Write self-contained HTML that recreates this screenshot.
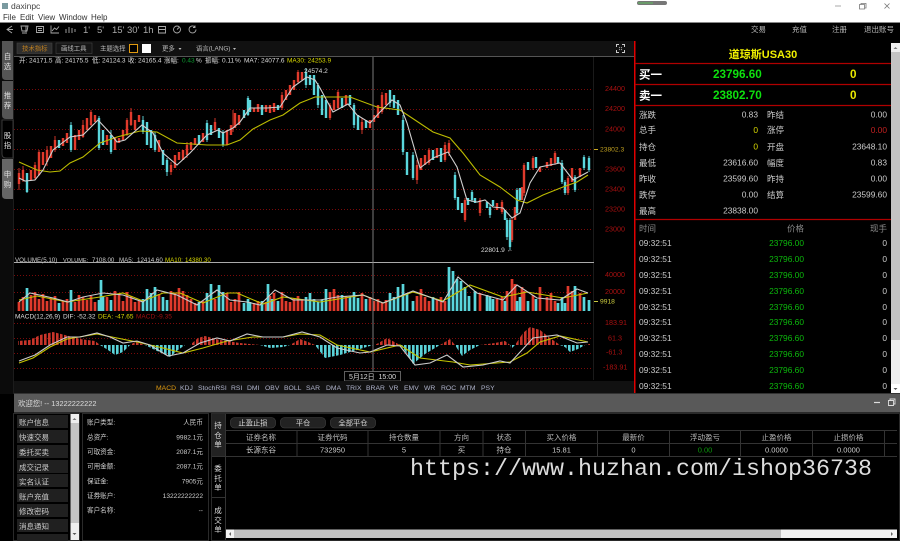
<!DOCTYPE html>
<html><head><meta charset="utf-8"><title>daxinpc</title>
<style>
html,body{margin:0;padding:0;background:#000;width:900px;height:541px;overflow:hidden}
svg{display:block;font-family:"Liberation Sans","Noto Sans CJK SC",sans-serif;filter:blur(.3px)}
text{white-space:pre}
.a{font-size:7.200px;fill:#a81010}
.r{text-anchor:end}
.c{text-anchor:middle}
.l{fill:none;stroke-width:1.1}
</style></head><body>
<svg width="900" height="541" viewBox="0 0 900 541" xmlns="http://www.w3.org/2000/svg">
<defs>
<pattern id="pr" width="4" height="10" patternUnits="userSpaceOnUse"><rect width="2.6" height="10" fill="#c8352a"/></pattern>
<pattern id="pc" width="4" height="10" patternUnits="userSpaceOnUse"><rect width="2.6" height="10" fill="#5ad2d8"/></pattern>
</defs>
<rect width="900" height="541" fill="#000"/>
<!-- title bar -->
<rect width="900" height="22" fill="#fff"/>
<rect y="22" width="900" height="1" fill="#888"/>
<rect x="2" y="3" width="6" height="6" fill="#7a9aa0"/>
<text x="11" y="9" style="font-size:8.5px;fill:#444">daxinpc</text>
<g style="font-size:8px;fill:#333"><text x="3" y="20">File</text><text x="20" y="20">Edit</text><text x="38" y="20">View</text><text x="59" y="20">Window</text><text x="91" y="20">Help</text></g>
<rect x="637" y="1" width="30" height="4" rx="2" fill="#777"/><rect x="638" y="2" width="15" height="2" fill="#6a9a6a"/>
<path d="M835 6h6" stroke="#aaa" fill="none"/>
<path d="M859.500 4.500h5v4.500h-5zM861 4.500v-1h5v4.500h-1" stroke="#777" fill="none" stroke-width=".8"/>
<path d="M884.500 3.500l5 5M889.500 3.500l-5 5" stroke="#777" fill="none" stroke-width=".8"/>
<!-- toolbar -->
<g fill="none" stroke="#aaa" stroke-width=".9">
<path d="M12 26l-5 3.500 5 3.500M7 29.500h6"/>
<path d="M21 26h7l-1 5h-5zM22 33h5M26 26v6"/>
<path d="M36.500 26.500h7v6h-7zM38 28.500h4M38 30.500h4"/>
<path d="M51 25.500v7.500h8M52 31l2.500-3 2 1.500 2.500-3"/>
<path d="M66 29v4M69 27v6M72 28v5M75 29v3"/>
<path d="M158.500 26.500h7v6.500h-7zM158.500 29.500h7"/>
<circle cx="177" cy="29.500" r="3.500"/><path d="M177 29.500l2-2"/>
<path d="M195 27a3.500 3.500 0 1 0 1 2.500M195 25.500v2h-2"/>
</g>
<g style="font-size:9.500px;fill:#aaa"><text x="83" y="33">1'</text><text x="97" y="33">5'</text><text x="112" y="33">15'</text><text x="127" y="33">30'</text><text x="143" y="33">1h</text></g>
<g style="font-size:7.500px;fill:#bbb"><text x="751" y="32">交易</text><text x="792" y="32">充值</text><text x="832" y="32">注册</text><text x="864" y="32">退出账号</text></g>
<!-- side tabs -->
<rect x="0" y="41" width="13" height="353" fill="#0b0b0b"/>
<rect x="13" y="41" width="1" height="353" fill="#1c1c1c"/>
<path d="M2 41h11v39h-7q-4 0-4-4zM2 81h11v38h-7q-4 0-4-4z" fill="#555"/>
<path d="M2 120h11v38h-7q-4 0-4-4z" fill="#000" stroke="#444" stroke-width=".8"/>
<path d="M2 159h11v40h-7q-4 0-4-4z" fill="#666"/>
<g style="font-size:7.500px;fill:#ddd" class="c">
<text x="7.500" y="59">自</text><text x="7.500" y="69">选</text>
<text x="7.500" y="98">推</text><text x="7.500" y="108">荐</text>
<text x="7.500" y="138">股</text><text x="7.500" y="148">指</text>
<text x="7.500" y="177">申</text><text x="7.500" y="187">购</text>
</g>
<!-- chart toolbar -->
<rect x="14" y="41" width="620" height="15" fill="#111"/>
<rect x="14" y="56" width="620" height="1" fill="#555"/>
<rect x="17" y="43" width="35" height="10.500" fill="#2e2e2e" stroke="#444" stroke-width=".6"/>
<text x="22" y="50.500" style="font-size:6.400px;fill:#c08020">技术指标</text>
<rect x="56" y="43" width="36" height="10.500" fill="#151515" stroke="#444" stroke-width=".6"/>
<text x="61" y="50.500" style="font-size:6.400px;fill:#bbb">画线工具</text>
<text x="100" y="50.500" style="font-size:6.400px;fill:#bbb">主题选择</text>
<rect x="129.500" y="44.500" width="8" height="8" fill="#000" stroke="#e09a10"/>
<rect x="142" y="44" width="9" height="9" fill="#fff"/>
<text x="162" y="50.500" style="font-size:6.400px;fill:#bbb">更多</text><path d="M178.500 48h3l-1.500 2z" fill="#bbb"/>
<text x="196" y="50.500" style="font-size:6.400px;fill:#bbb">语言(LANG)</text><path d="M233 48h3l-1.500 2z" fill="#bbb"/>
<path d="M616 44h3v1h-2v2h-1zM625 44h-3v1h2v2h1zM616 53h3v-1h-2v-2h-1zM625 53h-3v-1h2v-2h1z" fill="#ccc"/>
<path d="M619 47l1 1M622 47l-1 1M619 50l1-1M622 50l-1-1" stroke="#ccc" stroke-width=".6"/>
<!-- grids -->
<g stroke="#7a0a0a" stroke-width="1" stroke-dasharray="1 2" fill="none">
<path d="M14 89.500H593M14 109.500H593M14 129.500H593M14 149.500H593M14 169.500H593M14 189.500H593M14 209.500H593M14 229.500H593"/>
<path d="M14 275.500H593M14 292.500H593M14 323.500H593M14 338.500H593M14 353.500H593M14 368.500H593"/>
</g>
<path d="M593.500 57V380" stroke="#1a1a1a"/>
<g style="font-size:6.500px;fill:#ddd">
<text x="19" y="62.500">开:</text><text x="29" y="62.500">24171.5</text><text x="55" y="62.500">高:</text><text x="65" y="62.500">24175.5</text><text x="92" y="62.500">低:</text><text x="102" y="62.500">24124.3</text><text x="128" y="62.500">收:</text><text x="138" y="62.500">24165.4</text><text x="164" y="62.500">涨幅:</text><text x="182" y="62.500" style="fill:#0c9a30">0.43</text><text x="196" y="62.500">%</text><text x="205" y="62.500">振幅:</text><text x="222" y="62.500">0.11</text><text x="235" y="62.500">%</text><text x="244" y="62.500">MA7:</text><text x="261" y="62.500">24077.6</text><text x="287" y="62.500" style="fill:#d8d800">MA30: 24253.9</text>
</g>
<!-- candles wicks -->
<path stroke="#e03a2c" stroke-width=".9" fill="none" d="M19 168V190M23 166V182M35 162V180M39 150V176M47 146V166M55 136V152M83 120V138M91 110V126M127 118V136M131 108V126M171 162V175M187 142V158M215 118V132M233 110V132M282 92V110M298 70V84M330 103V120M338 90V110M362 118V134M382 92V114M417 160V184M429 148V165M445 142V162M449 140V156M465 198V222M480 198V216M502 200V214M512 218V242M524 163V196M533 156V170M555 151V165M568 176V195"/>
<path stroke="#62dbe0" stroke-width=".9" fill="none" d="M27 175V193M71 122V152M99 116V150M111 130V154M143 116V134M155 132V152M167 158V176M207 120V142M223 130V147M248 96V116M306 68V88M318 83V108M354 103V128M390 90V107M403 115V155M413 152V180M455 172V200M472 190V202M490 205V218M507 218V240M510 218V250M517 188V215M562 160V184M565 180V195M575 175V192M584 155V170M589 156V172"/>
<g stroke-width="2.400" fill="none">
<path stroke="#e03a2c" d="M19 173V184M23 170V180M31 170V180M35 165V178M39 152V175M43 152V165M47 150V162M51 146V158M55 140V150M63 138V146M67 133V143M75 135V150M79 130V140M83 125V137M87 118V130M91 112V125M95 115V122M107 135V145M115 137V150M119 138V143M123 130V140M127 120V135M131 112V125M135 120V130M139 115V122M159 140V152M171 165V172M175 155V168M179 152V160M183 150V160M187 145V155M191 142V150M195 138V145M203 133V142M215 122V130M227 130V145M231 125V135M235 113V128M239 115V125M254 108V112M258 104V112M266 105V112M270 105V113M274 103V112M282 95V108M286 90V100M290 85V95M294 80V90M298 72V82M302 72V80M330 105V118M334 100V110M338 92V108M346 95V105M362 122V130M370 120V128M374 115V122M378 105V118M382 95V112M386 93V105M417 165V180M421 158V170M425 155V165M429 150V163M437 148V158M445 145V160M449 143V153M465 200V220M480 200V213M497 203V210M502 202V212M512 220V240M515 207V220M522 187V200M524 165V193M533 158V168M540 167V172M547 162V168M551 158V166M555 153V163M568 178V193M572 168V182M580 168V177"/>
<path stroke="#5ad6dc" d="M27 173V192M59 140V148M71 125V150M99 118V148M103 130V145M111 135V152M143 120V132M147 122V145M151 130V148M155 135V150M163 150V165M167 160V172M199 135V145M207 123V140M211 125V135M219 128V138M223 132V145M244 110V118M248 98V115M250 100V112M262 105V115M278 105V110M306 72V85M310 75V85M314 75V95M318 85V105M322 95V115M326 100V118M342 98V108M350 95V105M354 105V125M358 115V130M366 120V128M390 90V103M394 95V108M398 100V115M403 120V152M407 152V175M413 155V178M433 150V160M441 148V162M455 175V198M458 197V210M462 203V213M468 198V205M472 192V200M475 198V203M487 202V208M490 207V215M493 200V206M505 210V220M507 220V237M510 220V247M517 190V213M520 188V200M528 162V170M536 157V168M558 157V163M562 163V182M565 182V193M575 177V190M584 157V168M589 158V170"/>
</g>
<polyline class="l" stroke="#bcbc00" points="19,162 37,170 50,172 60,171 70,163 83,157 100,143 117,137 140,131 157,132 177,143 207,145 227,145 240,140 253,129 270,120 283,115 300,103 315,97 350,97 377,107 400,110 415,120 433,132 450,138 463,153 480,175 500,187 517,200 527,203 543,195 563,187 577,182 588,175"/>
<polyline class="l" stroke="#d0d0d0" points="19,178 25,181 35,180 43,170 53,150 70,137 83,135 98,120 110,133 117,142 125,140 142,125 153,133 163,153 177,165 190,153 207,135 218,130 223,133 233,128 240,122 250,108 267,108 280,107 293,87 307,77 315,80 320,88 333,112 348,104 357,115 370,123 380,112 392,100 400,105 407,123 420,168 433,158 448,152 457,167 467,200 477,202 485,200 493,207 503,208 512,218 520,213 530,183 540,167 560,163 573,180 588,172"/>
<text x="304" y="73" style="font-size:6.600px;fill:#ddd">24574.2</text>
<text x="481" y="252" style="font-size:6.600px;fill:#ddd">22801.9 ←</text>
<!-- axis labels -->
<g class="a"><text x="605" y="91">24400</text><text x="605" y="111">24200</text><text x="605" y="131.500">24000</text><text x="605" y="171.500">23600</text><text x="605" y="191.500">23400</text><text x="605" y="211.500">23200</text><text x="605" y="231.500">23000</text>
<text x="605" y="277">40000</text><text x="605" y="294">20000</text>
<text x="605" y="325">183.91</text><text x="608" y="340.500">61.3</text><text x="606" y="354.500">-61.3</text><text x="603" y="369.500">-183.91</text></g>
<path d="M594 149.500h4" stroke="#c8a820"/><text x="600" y="151.500" style="font-size:6.700px;fill:#c0a020">23802.3</text>
<path d="M594 301.500h4" stroke="#c8c840"/><text x="600" y="303.500" style="font-size:6.700px;fill:#d0d040">9918</text>
<!-- volume -->
<rect x="14" y="262" width="580" height="1" fill="#aaa"/>
<g style="font-size:6.200px;fill:#ccc">
<text x="15" y="262">VOLUME(5,10)</text><text x="63" y="262" style="font-size:5.600px">VOLUME:</text><text x="92" y="262">7108.00</text><text x="119" y="262">MA5:</text><text x="137" y="262">12414.60</text><text x="165" y="262" style="fill:#d8d800">MA10:</text><text x="185" y="262" style="fill:#d8d800">14380.30</text>
</g>
<g stroke-width="2.700" fill="none">
<path stroke="#e03a2c" d="M19 311v-9M23 311v-14M31 311v-16M35 311v-19M39 311v-12M43 311v-17M47 311v-10M51 311v-13M55 311v-15M63 311v-10M67 311v-12M75 311v-9M79 311v-16M83 311v-14M87 311v-11M91 311v-15M95 311v-9M107 311v-14M115 311v-20M119 311v-17M123 311v-10M127 311v-19M131 311v-15M135 311v-9M139 311v-10M159 311v-17M171 311v-20M175 311v-18M179 311v-23M183 311v-20M187 311v-16M191 311v-12M195 311v-8M203 311v-10M215 311v-12M227 311v-18M231 311v-9M235 311v-12M239 311v-19M254 311v-8M258 311v-10M266 311v-9M270 311v-15M274 311v-18M282 311v-19M286 311v-10M290 311v-9M294 311v-13M298 311v-15M302 311v-12M330 311v-19M334 311v-22M338 311v-16M346 311v-15M362 311v-18M370 311v-14M374 311v-10M378 311v-12M382 311v-8M386 311v-11M417 311v-15M421 311v-22M425 311v-14M429 311v-10M437 311v-12M441 311v-14M445 311v-10M480 311v-18M497 311v-12M502 311v-14M507 311v-20M512 311v-32M515 311v-27M522 311v-24M524 311v-20M533 311v-16M540 311v-24M547 311v-14M551 311v-18M555 311v-10M568 311v-25M572 311v-20M580 311v-18"/>
<path stroke="#5ad6dc" d="M27 311v-23M59 311v-8M71 311v-21M99 311v-11M101 311v-31M103 311v-15M111 311v-11M143 311v-12M147 311v-22M151 311v-18M155 311v-24M163 311v-14M167 311v-11M199 311v-9M207 311v-18M211 311v-27M219 311v-26M223 311v-19M244 311v-8M248 311v-12M250 311v-9M262 311v-10M268 311v-27M272 311v-12M278 311v-10M306 311v-14M310 311v-18M314 311v-12M318 311v-9M322 311v-11M326 311v-22M342 311v-16M350 311v-14M354 311v-19M358 311v-13M366 311v-12M390 311v-18M394 311v-14M398 311v-24M403 311v-27M407 311v-18M413 311v-10M433 311v-14M449 311v-44M453 311v-40M457 311v-32M461 311v-30M465 311v-24M469 311v-15M475 311v-20M487 311v-16M490 311v-14M493 311v-12M505 311v-10M517 311v-10M520 311v-14M528 311v-10M536 311v-12M558 311v-8M562 311v-14M565 311v-8M575 311v-25M584 311v-14M589 311v-11"/>
</g>
<polyline class="l" stroke="#c4c400" points="19,300 37,296 67,302 100,297 123,293 143,301 163,293 180,293 203,303 227,293 237,293 263,304 283,297 320,302 363,295 383,303 413,292 443,301 470,285 503,297 527,292 563,298 588,293"/>
<polyline class="l" stroke="#ccc" points="19,302 30,293 53,298 68,302 83,297 103,293 123,295 143,302 157,290 177,295 197,305 217,290 230,300 247,302 260,305 275,290 293,300 320,300 337,297 363,295 383,303 413,291 443,302 458,277 477,293 503,300 517,285 537,298 560,300 577,289 588,293"/>
<!-- macd -->
<g style="font-size:6.500px;fill:#ddd">
<text x="15" y="318.500">MACD(12,26,9)</text><text x="63" y="318.500">DIF:</text><text x="77" y="318.500">-52.32</text><text x="98" y="318.500" style="fill:#d8d800">DEA:</text><text x="115" y="318.500" style="fill:#d8d800">-47.65</text><text x="136" y="318.500" style="fill:#a01010">MACD:</text><text x="157" y="318.500" style="fill:#a01010">-9.35</text>
</g>
<polygon fill="url(#pr)" points="18,345 18,341 30,340 40,335 53,332 65,335 80,339 95,341 100,345 130,345 135,342 145,345 190,345 198,338 205,336 220,340 240,343 260,345 290,345 300,339 308,342 315,345 375,345 387,338 400,345 440,345 450,339 455,345 480,345 495,343 505,341 510,345 515,345 523,333 530,327 540,330 550,338 560,345 585,345 590,344 590,345"/>
<polygon fill="url(#pc)" points="100,345 108,350 115,355 123,352 130,345 145,345 155,350 170,357 178,350 185,345 260,345 270,348 283,347 290,345 315,345 325,358 340,355 360,349 373,345 400,345 405,351 413,364 425,354 440,345 455,345 462,356 470,350 480,345 510,345 511,349 515,345 560,345 565,347 570,352 578,349 585,345"/>
<polyline class="l" stroke="#c4c400" points="19,363 33,358 50,347 67,339 97,334 117,338 137,342 163,348 183,353 203,348 227,341 253,337 283,337 300,334 320,335 337,345 370,352 400,345 420,358 453,362 470,365 510,362 527,353 540,342 560,336 588,342"/>
<polyline class="l" stroke="#ccc" points="19,361 35,355 50,345 67,337 80,337 97,333 110,337 123,343 137,341 150,345 168,356 183,353 200,343 217,338 230,341 247,334 263,337 283,337 302,332 320,337 337,348 360,353 370,352 387,345 400,346 415,365 430,363 447,355 463,367 483,365 500,361 510,363 533,338 557,335 577,343 588,342"/>
<!-- crosshair -->
<path d="M373 57V372" stroke="#888" stroke-width=".9"/>
<rect x="344.500" y="371.500" width="56" height="9.500" fill="#000" stroke="#777" stroke-width=".8"/>
<text x="372.500" y="379" class="c" style="font-size:7px;fill:#ddd">5月12日  15:00</text>
<!-- indicator tabs -->
<rect x="14" y="381" width="620" height="12" fill="#111"/>
<g style="font-size:6.800px;fill:#b0b4cc"><text x="156" y="390" style="fill:#e09a10">MACD</text><text x="180" y="390">KDJ</text><text x="198" y="390">StochRSI</text><text x="231" y="390">RSI</text><text x="247" y="390">DMI</text><text x="265" y="390">OBV</text><text x="284" y="390">BOLL</text><text x="306" y="390">SAR</text><text x="326" y="390">DMA</text><text x="346" y="390">TRIX</text><text x="366" y="390">BRAR</text><text x="389" y="390">VR</text><text x="404" y="390">EMV</text><text x="424" y="390">WR</text><text x="441" y="390">ROC</text><text x="460" y="390">MTM</text><text x="481" y="390">PSY</text></g>
<!-- right panel -->
<rect x="634" y="41" width="1.500" height="352" fill="#e00000"/>
<text x="763" y="58" class="c" style="font-size:11px;font-weight:bold;fill:#f0f000">道琼斯USA30</text>
<path d="M635 63.500H891M635 84.500H891M635 105.500H891M635 219.500H891" stroke="#b00000" stroke-width="1.200"/>
<text x="639" y="78.500" style="font-size:11.500px;font-weight:bold;fill:#fff">买一</text>
<text x="639" y="99.500" style="font-size:11.500px;font-weight:bold;fill:#fff">卖一</text>
<g style="font-size:11.700px;font-weight:bold"><text x="713" y="78" fill="#0ee00e">23796.60</text><text x="713" y="99" fill="#0ee00e">23802.70</text><text x="850" y="78" fill="#e8e800">0</text><text x="850" y="99" fill="#e8e800">0</text></g>
<g style="font-size:8.500px;fill:#ccc">
<text x="639" y="118">涨跌</text><text x="767" y="118">昨结</text>
<text x="639" y="133">总手</text><text x="767" y="133">涨停</text>
<text x="639" y="150">持仓</text><text x="767" y="150">开盘</text>
<text x="639" y="166">最低</text><text x="767" y="166">幅度</text>
<text x="639" y="182">昨收</text><text x="767" y="182">昨持</text>
<text x="639" y="198">跌停</text><text x="767" y="198">结算</text>
<text x="639" y="214">最高</text>
</g>
<g style="font-size:8.400px;fill:#ccc;text-anchor:end">
<text x="758" y="117.500">0.83</text><text x="887" y="117.500">0.00</text>
<text x="758" y="133" style="fill:#d8d800">0</text><text x="887" y="133" style="fill:#c02020">0.00</text>
<text x="758" y="149.500" style="fill:#d8d800">0</text><text x="887" y="149.500">23648.10</text>
<text x="758" y="165.500">23616.60</text><text x="887" y="165.500">0.83</text>
<text x="758" y="181.500">23599.60</text><text x="887" y="181.500">0.00</text>
<text x="758" y="197.500">0.00</text><text x="887" y="197.500">23599.60</text>
<text x="758" y="213.500">23838.00</text>
</g>
<g style="font-size:8.500px;fill:#888"><text x="639" y="231.500">时间</text><text x="804" y="231.500" class="r">价格</text><text x="887" y="231.500" class="r">现手</text></g>
<g style="font-size:8.400px;fill:#ccc">
<text x="639" y="246">09:32:51</text><text x="639" y="262">09:32:51</text><text x="639" y="278">09:32:51</text><text x="639" y="294">09:32:51</text><text x="639" y="310">09:32:51</text><text x="639" y="325">09:32:51</text><text x="639" y="341">09:32:51</text><text x="639" y="357">09:32:51</text><text x="639" y="373">09:32:51</text><text x="639" y="389">09:32:51</text>
</g>
<g style="font-size:8.400px;fill:#0cb80c;text-anchor:end">
<text x="804" y="246">23796.00</text><text x="804" y="262">23796.00</text><text x="804" y="278">23796.00</text><text x="804" y="294">23796.60</text><text x="804" y="310">23796.60</text><text x="804" y="325">23796.60</text><text x="804" y="341">23796.60</text><text x="804" y="357">23796.60</text><text x="804" y="373">23796.60</text><text x="804" y="389">23796.60</text>
</g>
<g style="font-size:8.400px;fill:#ccc;text-anchor:end">
<text x="887" y="246">0</text><text x="887" y="262">0</text><text x="887" y="278">0</text><text x="887" y="294">0</text><text x="887" y="310">0</text><text x="887" y="325">0</text><text x="887" y="341">0</text><text x="887" y="357">0</text><text x="887" y="373">0</text><text x="887" y="389">0</text>
</g>
<rect x="891" y="43" width="9" height="350" fill="#c4c4c4"/>
<rect x="891" y="43" width="9" height="9" fill="#eee"/><path d="M893.500 49h4l-2-2z" fill="#777"/>
<rect x="891" y="340" width="9" height="53" fill="#eee"/><rect x="891" y="384" width="9" height="9" fill="#fff"/><path d="M893.500 388h4l-2 2z" fill="#555"/>
<!-- bottom panel -->
<rect x="14" y="393" width="886" height="1" fill="#333"/>
<rect x="14" y="394" width="886" height="18" fill="#595959"/>
<rect x="14" y="412" width="886" height="1" fill="#2a2a2a"/>
<text x="18" y="406" style="font-size:7.400px;fill:#ddd">欢迎您! -- 13222222222</text>
<path d="M874 402.500h6" stroke="#ddd" stroke-width="1.200"/>
<path d="M888.500 400.500h5v5h-5zM890 400.500v-1.500h5v5h-1.500" stroke="#ddd" fill="none" stroke-width=".9"/>
<!-- menu -->
<rect x="13.500" y="413.500" width="66" height="127" fill="none" stroke="#2a2a2a"/>
<g fill="#202020"><rect x="17" y="415" width="51" height="13"/><rect x="17" y="430" width="51" height="13"/><rect x="17" y="445" width="51" height="13"/><rect x="17" y="460" width="51" height="13"/><rect x="17" y="474" width="51" height="13"/><rect x="17" y="489" width="51" height="13"/><rect x="17" y="504" width="51" height="13"/><rect x="17" y="519" width="51" height="13"/><rect x="17" y="534" width="51" height="7"/></g>
<g style="font-size:7.500px;fill:#ccc"><text x="19" y="425">账户信息</text><text x="19" y="440">快速交易</text><text x="19" y="455">委托买卖</text><text x="19" y="470">成交记录</text><text x="19" y="484.500">实名认证</text><text x="19" y="499.500">账户充值</text><text x="19" y="514">修改密码</text><text x="19" y="529">消息通知</text></g>
<rect x="70.500" y="414" width="8.500" height="126" fill="#c4c4c4"/><rect x="70.500" y="414" width="8.500" height="9" fill="#eee"/><path d="M72.500 420h4l-2-2z" fill="#777"/>
<rect x="70.500" y="523" width="8.500" height="17" fill="#eee"/><path d="M72.500 533h4l-2 2z" fill="#555"/>
<!-- info -->
<rect x="82.500" y="413.500" width="126" height="127" fill="#000" stroke="#2a2a2a"/>
<g style="font-size:6.600px;fill:#ccc"><text x="87" y="424.500">账户类型:</text><text x="87" y="439.500">总资产:</text><text x="87" y="454">可取资金:</text><text x="87" y="468.500">可用金额:</text><text x="87" y="483.500">保证金:</text><text x="87" y="498">证券账户:</text><text x="87" y="512.500">客户名称:</text></g>
<g style="font-size:6.600px;fill:#ccc;text-anchor:end"><text x="203" y="424.500">人民币</text><text x="203" y="439.500">9982.1元</text><text x="203" y="454">2087.1元</text><text x="203" y="468.500">2087.1元</text><text x="203" y="483.500">7905元</text><text x="203" y="498">13222222222</text><text x="203" y="512.500">--</text></g>
<!-- orders tabs -->
<rect x="211.500" y="413.500" width="688" height="127" fill="none" stroke="#2a2a2a"/>
<rect x="212" y="414" width="13" height="42" fill="#222"/>
<path d="M212 456.500h13M212 497.500h13M225.500 414V540" stroke="#333"/>
<g style="font-size:7.500px;fill:#ddd;text-anchor:middle"><text x="218" y="428">持</text><text x="218" y="438">仓</text><text x="218" y="447">单</text><text x="218" y="471">委</text><text x="218" y="481">托</text><text x="218" y="490">单</text><text x="218" y="513">成</text><text x="218" y="523">交</text><text x="218" y="532">单</text></g>
<g fill="#222" stroke="#444" stroke-width=".6"><rect x="230.500" y="417.500" width="45" height="10.500" rx="4"/><rect x="280.500" y="417.500" width="45" height="10.500" rx="4"/><rect x="330.500" y="417.500" width="45" height="10.500" rx="4"/></g>
<g style="font-size:7.300px;fill:#ddd;text-anchor:middle"><text x="253" y="425.500">止盈止损</text><text x="303" y="425.500">平仓</text><text x="353" y="425.500">全部平仓</text></g>
<path d="M226 430.500H897M226 443.500H897M226 456.500H897M297 431V456M368 431V456M440 431V456M483 431V456M525.500 431V456M597.500 431V456M669.500 431V456M740.500 431V456M812.500 431V456M884.500 431V456" stroke="#333" fill="none"/>
<g style="font-size:7.500px;fill:#bbb;text-anchor:middle"><text x="261" y="440">证券名称</text><text x="332.500" y="440">证券代码</text><text x="404" y="440">持仓数量</text><text x="461.500" y="440">方向</text><text x="504" y="440">状态</text><text x="561.500" y="440">买入价格</text><text x="633.500" y="440">最新价</text><text x="705" y="440">浮动盈亏</text><text x="776.500" y="440">止盈价格</text><text x="848.500" y="440">止损价格</text></g>
<g style="font-size:7.500px;fill:#ccc;text-anchor:middle"><text x="261" y="452.500">长源东谷</text><text x="332.500" y="452.500">732950</text><text x="404" y="452.500">5</text><text x="461.500" y="452.500">买</text><text x="504" y="452.500">持仓</text><text x="561.500" y="452.500">15.81</text><text x="633.500" y="452.500">0</text><text x="705" y="452.500" style="fill:#0c9a0c">0.00</text><text x="776.500" y="452.500">0.0000</text><text x="848.500" y="452.500">0.0000</text></g>
<text x="410" y="475" style="font-family:'Liberation Mono',monospace;font-size:23.330px;fill:#ddd">https://www.huzhan.com/ishop36738</text>
<!-- h scrollbar -->
<rect x="226" y="529.500" width="671" height="8.500" fill="#f2f2f2"/>
<rect x="234" y="529.500" width="547" height="8.500" fill="#c0c0c0"/>
<path d="M231 532v4l-2-2zM891 532v4l2-2z" fill="#666"/>
</svg>
</body></html>
